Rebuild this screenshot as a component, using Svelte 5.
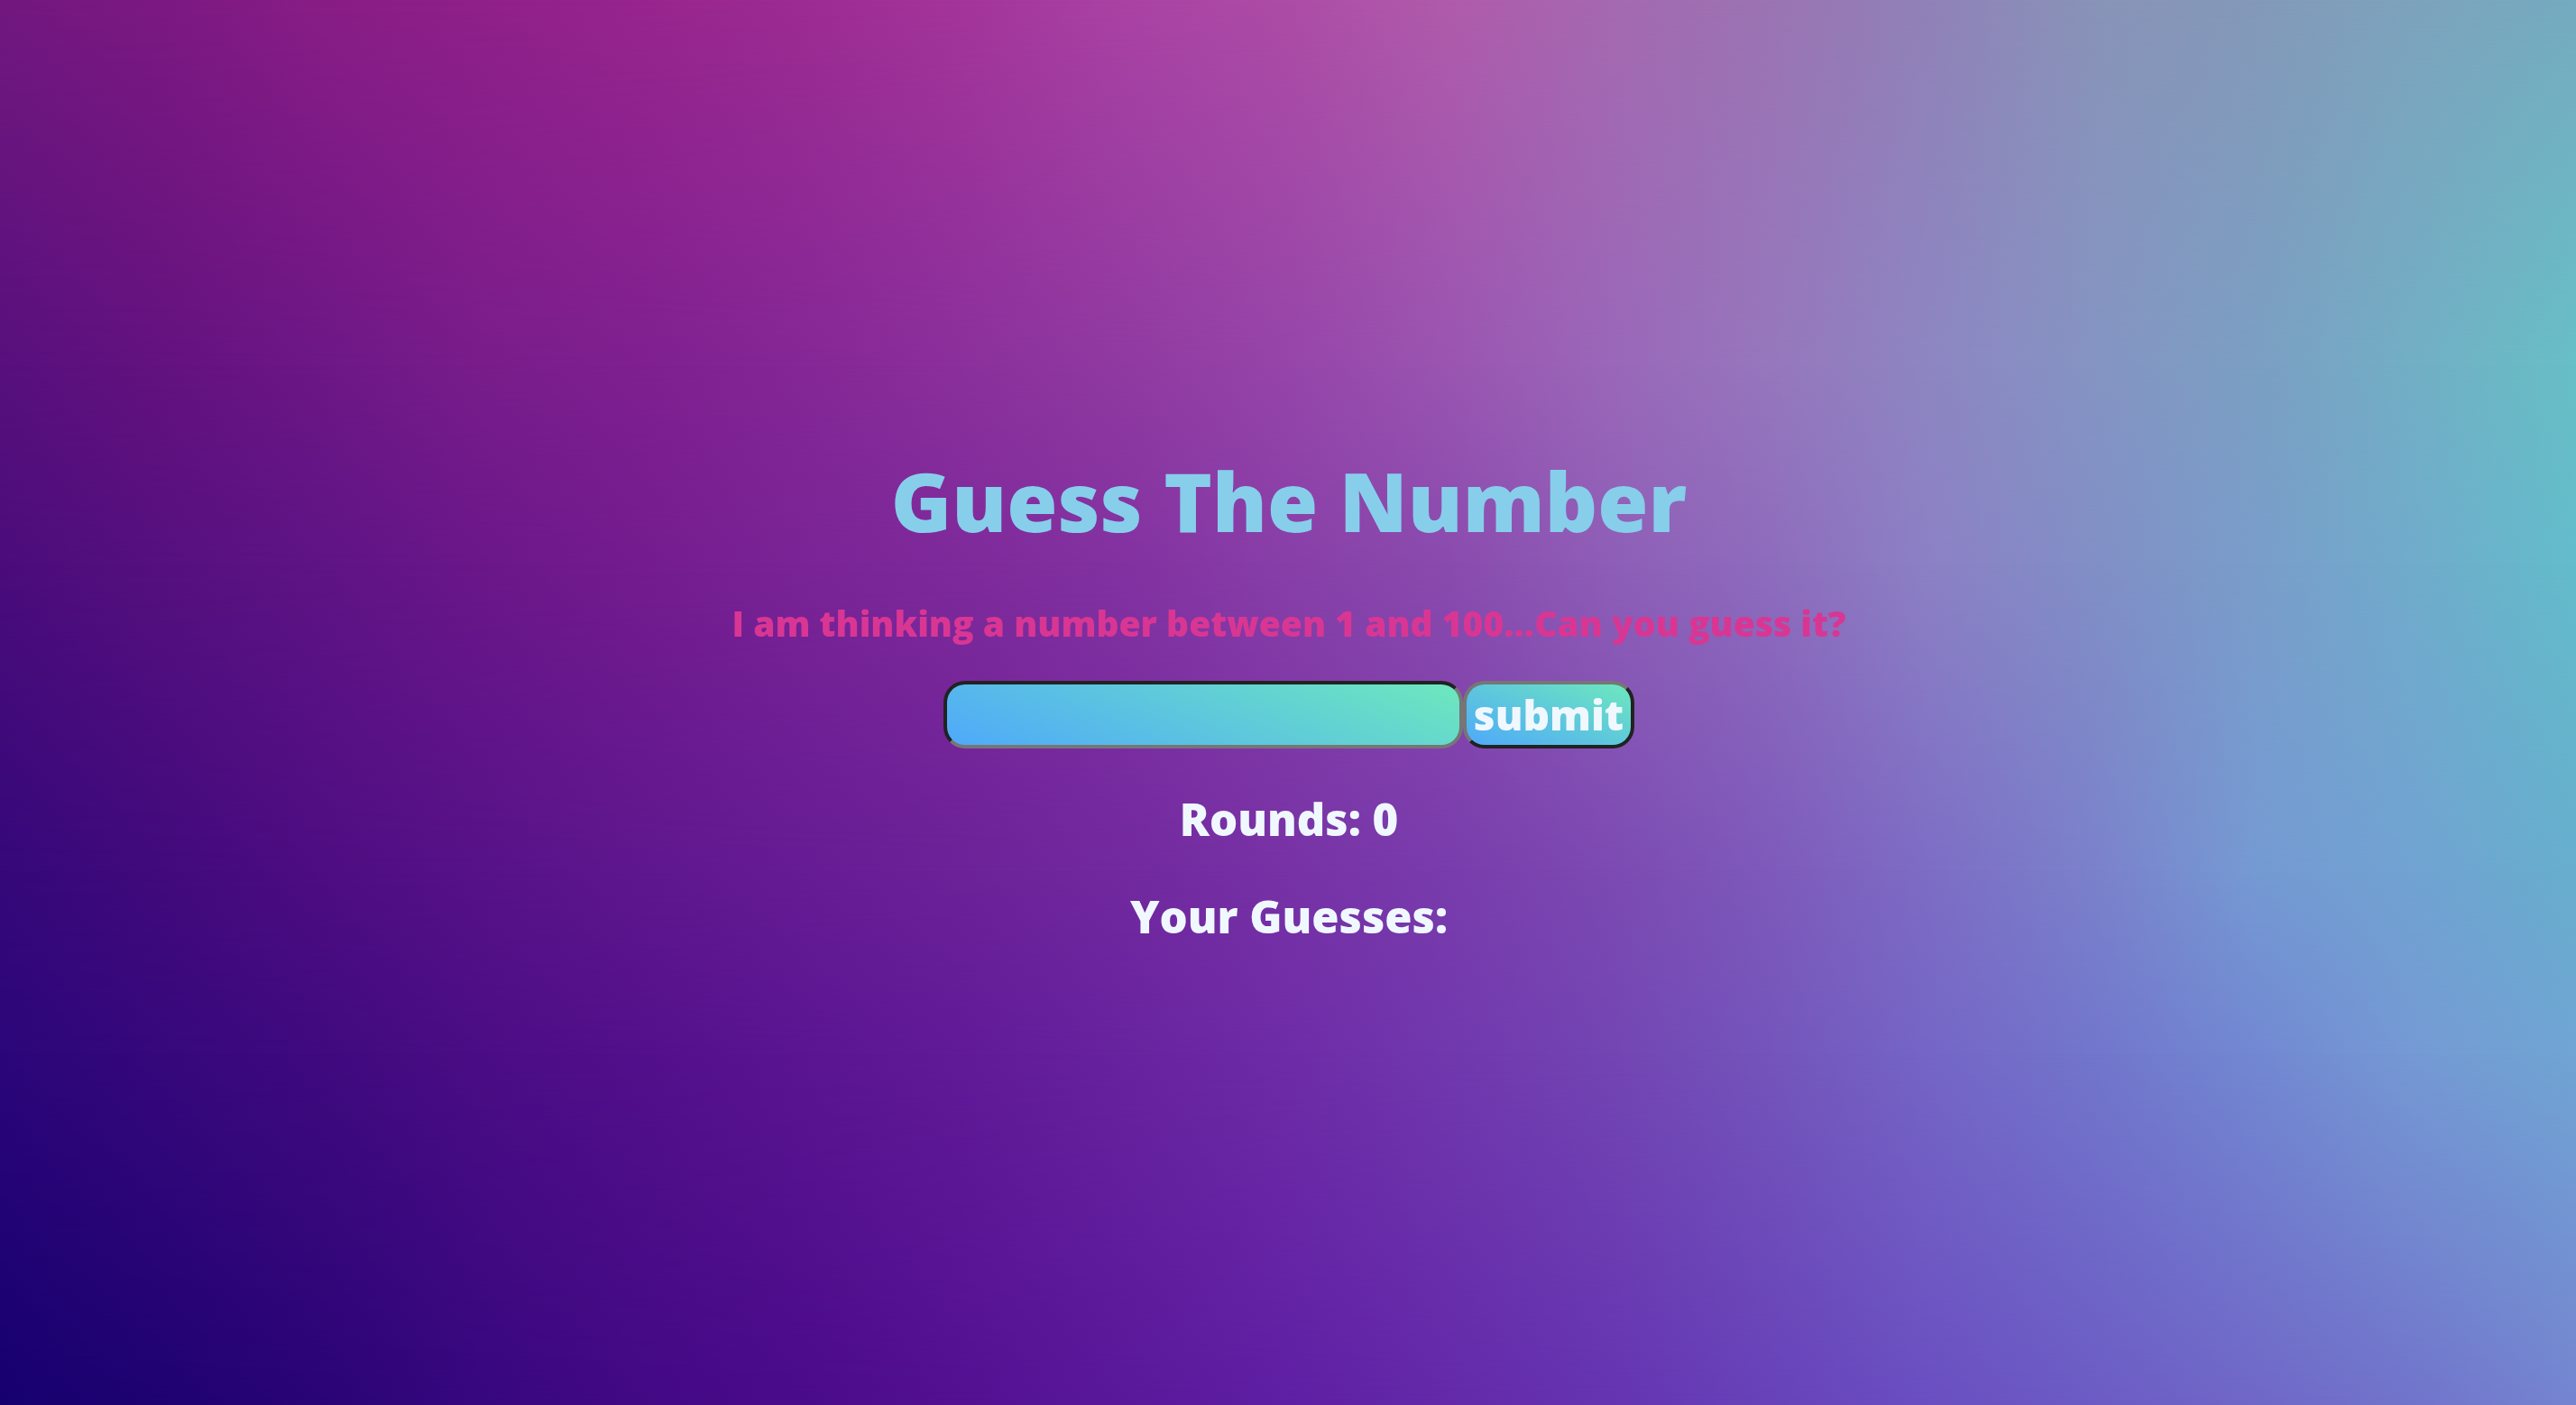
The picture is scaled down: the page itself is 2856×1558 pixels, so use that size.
<script>
  let guess = $state('');
  let guesses = $state([]);
  // Evenly spaced colours across the page, each row at its height in percent.
  const rows = [
    [0, '#72187f #7c1982 #891d86 #90208a #98258e #9d2c93 #a4359a #aa42a4 #ad4ca6 #b05bab #a569b0 #9b74b3 #9082b8 #8993b8 #8499b9 #7da3bd #75abc0'],
    [26, '#57107d #63127f #6d1786 #791d8b #7f2090 #852796 #8b309c #903aa1 #9645a9 #9a55b1 #9a67b9 #9677bd #8d86c2 #8594c3 #7b9fc3 #72afc5 #67bfc6'],
    [40, '#4b0c7b #56107f #5f1485 #6b178a #741c8f #7a2496 #7e2a9b #8332a1 #883fa8 #8a4bae #8e5eb7 #8e6cbd #8c81c5 #818fc6 #7a9dca #70accb #63bccb'],
    [62, '#35087a #410a7c #4e0d82 #571288 #5f178e #661c94 #6c2298 #72299f #7732a6 #793cac #7c4ab2 #7e5abb #7d6dc5 #7b81cb #759ad3 #71a3d2 #67aecd'],
    [75, '#2b067a #36087c #400a7f #4b0d85 #53108b #5b1592 #611a98 #68239f #6e2ca7 #7138ae #7345b3 #7455bb #7566c6 #7276cc #7288d2 #759ad4 #70a5d4'],
    [100, '#16006f #1f0272 #2a0476 #37077f #430985 #4a0b8a #531192 #59189a #5f1fa4 #6329a9 #6534b1 #6742b9 #6a4fc1 #6c5bc4 #7067c7 #7174cb #7584d0']
  ];
  const layers = rows.map(([at, stops], i) =>
    `background-image:linear-gradient(to right,${stops.split(' ').join(',')});` +
    (i ? `mask-image:linear-gradient(transparent ${rows[i - 1][0]}%,black ${at}%)` : '')
  );
  function submit(event) {
    event.preventDefault();
    if (guess) guesses.push(guess);
    guess = '';
  }
</script>

<div class="backdrop" aria-hidden="true">
  {#each layers as layer}<div class="layer" style={layer}></div>{/each}
</div>
<main>
  <h1>Guess The Number</h1>
  <h3>I am thinking a number between 1 and 100...Can you guess it?</h3>
  <form onsubmit={submit}>
    <input type="text" aria-label="Your guess" bind:value={guess} />
    <button type="submit">submit</button>
  </form>
  <p>Rounds: {guesses.length}</p>
  <p>Your Guesses: {guesses.join(', ')}</p>
</main>

<style>
  :global(body) { margin: 0; }
  .backdrop { position: fixed; inset: 0; z-index: -1; display: grid; }
  .layer { grid-area: 1 / 1; }
  main {
    min-height: 100vh;
    display: flex;
    flex-direction: column;
    align-items: center;
    justify-content: center;
    box-sizing: border-box;
    padding: 0 0 10px 2px;
    font-family: 'Gill Sans', 'Open Sans', sans-serif;
    font-weight: 800;
    color: aliceblue;
    text-align: center;
  }
  h1 { margin: 0 0 60px; font-size: 91px; line-height: 104px; font-weight: 800; color: skyblue; }
  h3 { margin: 0 0 40px; font-size: 39px; line-height: 48px; font-weight: 800; color: #d93693; }
  form { display: flex; margin-bottom: 48px; }
  input, button {
    box-sizing: border-box;
    height: 75px;
    border-radius: 24px;
    border: 4px solid;
    background: linear-gradient(22deg, #4fa9fa, #6de8bd);
    color: aliceblue;
    font: 800 46px 'Gill Sans', 'Open Sans', sans-serif;
  }
  input { width: 576px; padding: 0 12px; border-color: #222 #767676 #767676 #222; }
  button { width: 190px; padding: 0; border-color: #767676 #222 #222 #767676; }
  p { margin: 0; font-size: 49px; line-height: 60px; }
  p + p { margin-top: 48px; }
</style>
